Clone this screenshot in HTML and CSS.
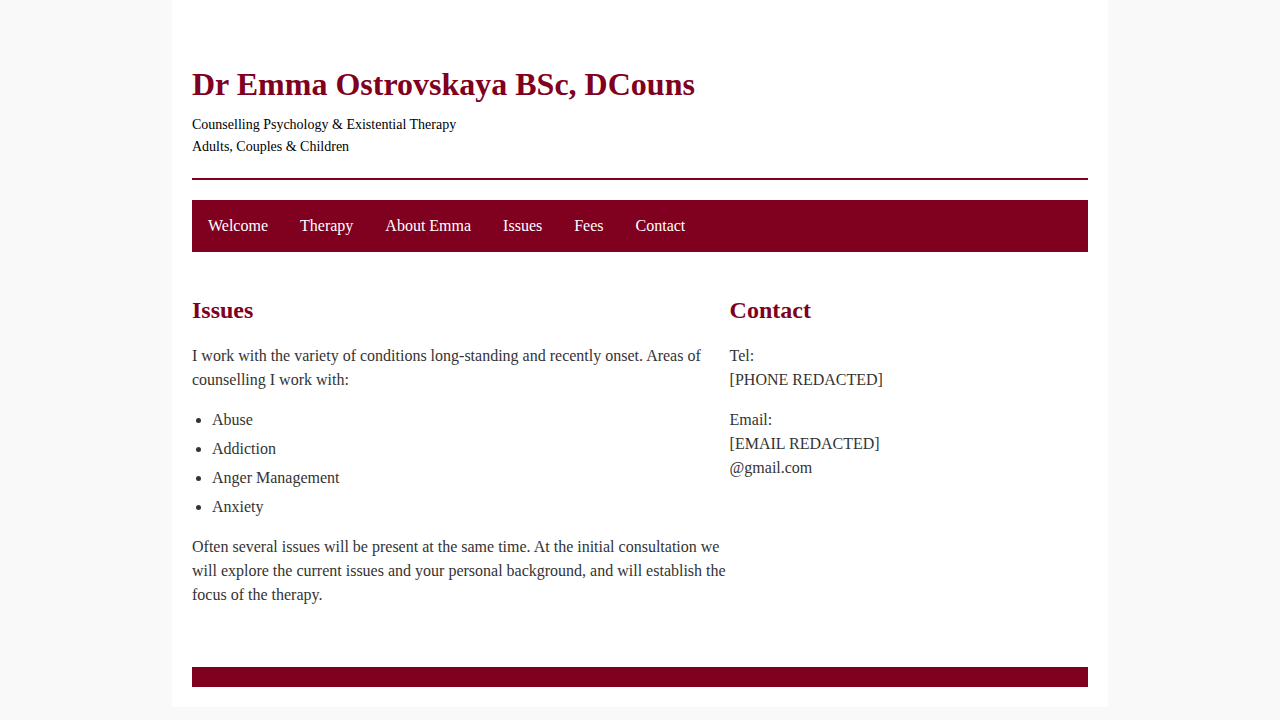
FILE: index.html
```html
<!DOCTYPE html>
<html lang="en">
<head>
<meta charset="utf-8">
<title>Dr Emma Ostrovskaya - Issues</title>
<link rel="stylesheet" href="styles.css">
</head>
<body>
<div class="page">
  <header class="site-header">
    <h1 class="site-title">Dr Emma Ostrovskaya BSc, DCouns</h1>
    <p class="tagline">Counselling Psychology &amp; Existential Therapy</p>
    <p class="tagline">Adults, Couples &amp; Children</p>
  </header>
  <nav class="main-nav">
    <a href="#">Welcome</a>
    <a href="#">Therapy</a>
    <a href="#">About Emma</a>
    <a href="#">Issues</a>
    <a href="#">Fees</a>
    <a href="#">Contact</a>
  </nav>
  <main class="content">
    <section class="primary">
      <h2>Issues</h2>
      <p>I work with the variety of conditions long-standing and recently onset. Areas of counselling I work with:</p>
      <ul class="issue-list">
        <li>Abuse</li>
        <li>Addiction</li>
        <li>Anger Management</li>
        <li>Anxiety</li>
      </ul>
      <p>Often several issues will be present at the same time. At the initial consultation we will explore the current issues and your personal background, and will establish the focus of the therapy.</p>
    </section>
    <aside class="sidebar">
      <h2>Contact</h2>
      <p>Tel:<br>[PHONE REDACTED]</p>
      <p>Email:<br>[EMAIL REDACTED]<br>@gmail.com</p>
    </aside>
  </main>
  <footer class="site-footer"></footer>
</div>
</body>
</html>
```

FILE: styles.css
```css
html, body {
  margin: 0;
  padding: 0;
}
body {
  background: #f9f9f9;
  font-family: "Liberation Serif", "Times New Roman", serif;
  color: #333;
}
.page {
  width: 896px;
  margin: 0 auto;
  background: #fff;
  padding: 20px 20px 20px;
}
.site-header {
  padding-top: 45px;
  padding-bottom: 20px;
  border-bottom: 2px solid #800020;
}
.site-title {
  margin: 0 0 11px;
  font-size: 32px;
  line-height: 38px;
  font-weight: bold;
  color: #800020;
}
.tagline {
  margin: 0;
  font-size: 14px;
  line-height: 22px;
  color: #000;
}
.main-nav {
  margin-top: 20px;
  background: #800020;
  display: flex;
  padding: 0;
}
.main-nav a {
  color: #fff;
  text-decoration: none;
  font-size: 16px;
  line-height: 24px;
  padding: 14px 16px;
}
.content {
  display: flex;
  padding-top: 44px;
  padding-bottom: 60px;
}
.primary {
  width: 60%;
}
.sidebar {
  width: 40%;
}
.content h2 {
  margin: 0 0 19px;
  font-size: 24px;
  line-height: 29px;
  font-weight: bold;
  color: #800020;
}
.content p {
  margin: 0 0 16px;
  font-size: 16px;
  line-height: 24px;
}
.content p:last-child {
  margin-bottom: 0;
}
.issue-list {
  margin: 0 0 16px;
  padding-left: 20px;
  font-size: 16px;
  line-height: 24px;
}
.issue-list li {
  margin-bottom: 5px;
}
.site-footer {
  height: 20px;
  background: #800020;
}
```
